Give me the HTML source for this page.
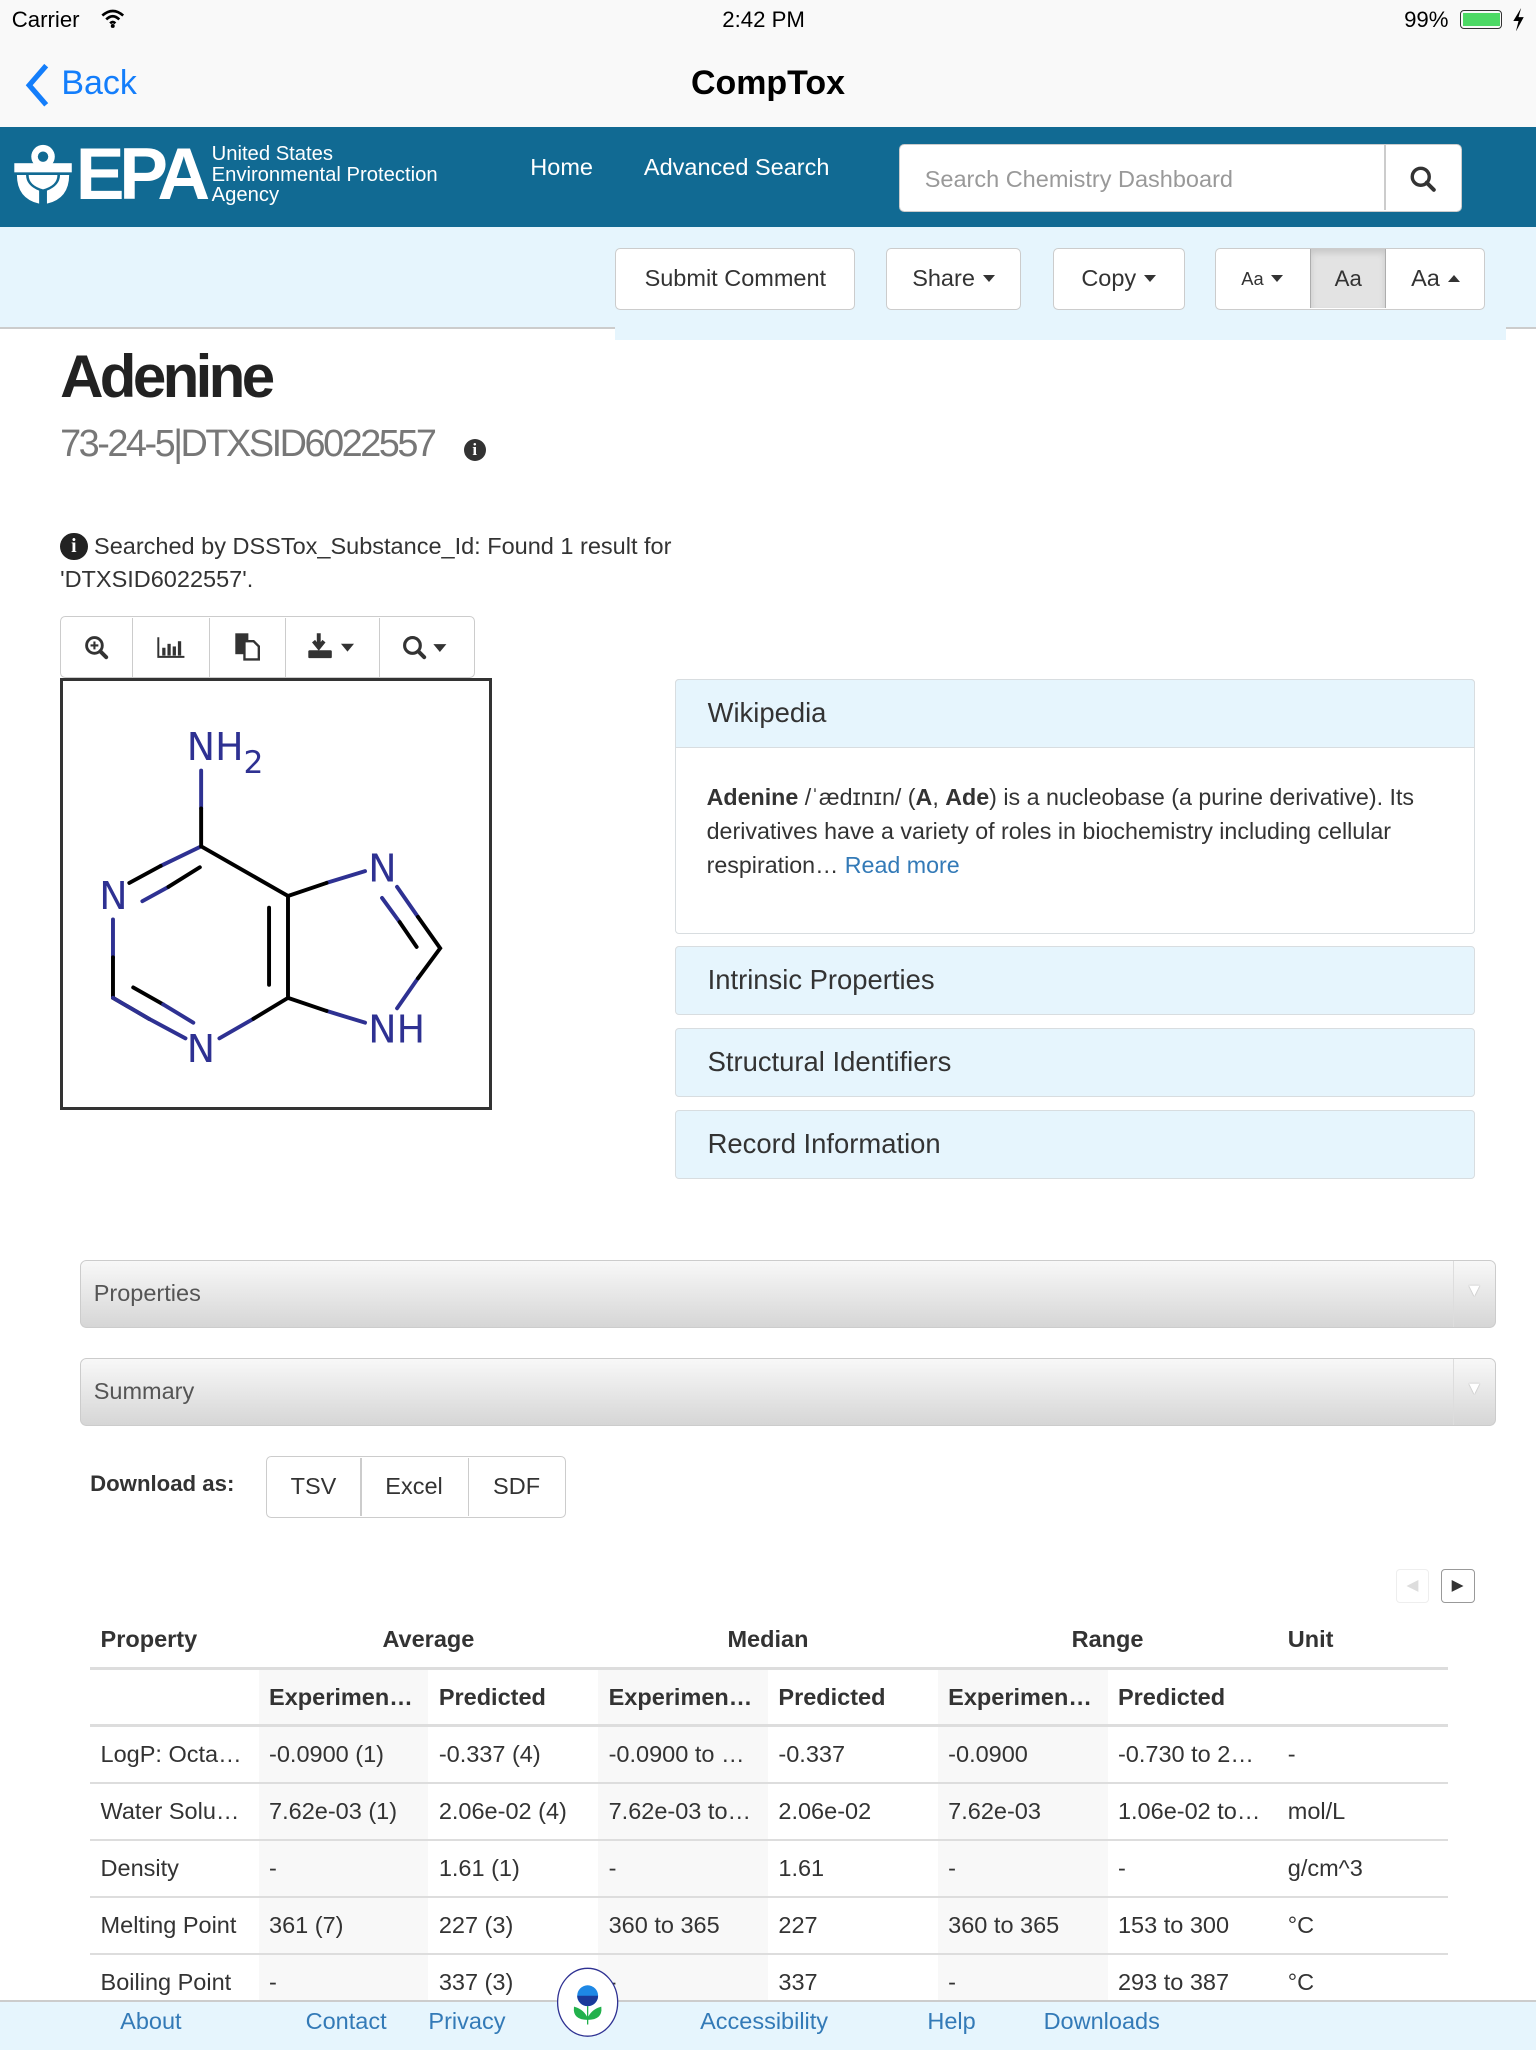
<!DOCTYPE html>
<html><head><meta charset="utf-8">
<style>
html{zoom:1.306122}
body{margin:0;width:1176px;height:1568px;position:relative;overflow:hidden;background:#fff;font-family:"Liberation Sans",Arial,sans-serif;color:#333}
.a{position:absolute}
.btn{position:absolute;background:#fff;border:1px solid #ccc;border-radius:4px;box-sizing:border-box;font-size:18px;color:#333;display:flex;align-items:center;justify-content:center}
.caret{display:inline-block;border-left:5px solid transparent;border-right:5px solid transparent;border-top:6px solid #333;margin-left:6px;vertical-align:middle}
.caretu{display:inline-block;border-left:5px solid transparent;border-right:5px solid transparent;border-bottom:6px solid #333;margin-left:6px;vertical-align:middle}
.ph{position:absolute;left:517px;width:612px;height:53px;background:#e6f5fd;border:1px solid #d8dde0;border-radius:3px;box-sizing:border-box;font-size:21px;color:#333;padding-left:24px;line-height:51px}
.bar{position:absolute;left:61px;width:1084px;height:52px;border:1px solid #ccc;border-radius:5px;box-sizing:border-box;background:linear-gradient(#f8f8f8,#d6d6d6);font-size:18px;color:#555;padding-left:10px;line-height:50px}
.bar:after{content:"▼";position:absolute;right:0;top:0;width:31px;height:50px;border-left:1px solid #ddd;color:#fff;font-size:14px;text-align:center;line-height:44px;text-shadow:0 0 1px #888}
table{position:absolute;left:69px;top:1235px;width:1040px;border-collapse:collapse;font-size:18px;table-layout:fixed}
td,th{height:42px;padding:0 8px;text-align:left;white-space:nowrap;overflow:hidden;text-overflow:ellipsis;border-bottom:2px solid #ddd}
th{font-weight:bold;color:#333}
tr.h1 th{border-bottom:3px solid #ddd;height:41px}
tr.h2 th{border-bottom:3px solid #ddd;height:42px}
.s{background:#f8f8f8}
.foot a{position:absolute;top:0;line-height:30px;font-size:18px;color:#337ab7;text-decoration:none}
</style></head><body>
<div class="a" style="left:0;top:0;width:1176px;height:97px;background:#f9f9f9;border-bottom:1px solid #bbb"></div>
<div class="a" style="left:9px;top:5px;font-size:17px;color:#000">Carrier</div>
<svg class="a" style="left:77px;top:7px" width="18" height="15" viewBox="0 0 18 15"><path d="M1 5Q9 -2 17 5M4 8Q9 3 14 8M7 11Q9 9 11 11" fill="none" stroke="#000" stroke-width="2"/><circle cx="9" cy="13" r="1.5" fill="#000"/></svg>
<div class="a" style="left:553px;top:5px;font-size:17px;color:#000">2:42 PM</div>
<div class="a" style="left:1075px;top:5px;font-size:17px;color:#000">99%</div>
<div class="a" style="left:1118px;top:8px;width:32px;height:14px;border:1px solid #333;border-radius:3px;box-sizing:border-box;padding:1px"><div style="background:#4cd964;width:100%;height:100%"></div></div>
<svg class="a" style="left:1158px;top:6px" width="10" height="18" viewBox="0 0 10 18"><path d="M7 0L1 10H5L3 18L9 7H5Z" fill="#000"/></svg>
<svg class="a" style="left:18px;top:48px" width="22" height="34" viewBox="0 0 22 34"><path d="M17 2 L4 17 L17 32" fill="none" stroke="#147efb" stroke-width="4"/></svg>
<div class="a" style="left:47px;top:49px;font-size:26px;color:#147efb">Back</div>
<div class="a" style="left:0;width:1176px;top:49px;text-align:center;font-size:26px;font-weight:bold;color:#000">CompTox</div>
<div class="a" style="left:0;top:97px;width:1176px;height:77px;background:#116a93"></div>
<svg class="a" style="left:10px;top:108px" width="48" height="50" viewBox="0 0 48 50"><circle cx="23" cy="12" r="9" fill="#fff"/><circle cx="23" cy="12" r="4" fill="#116a93"/><rect x="1" y="17" width="44" height="7" fill="#fff"/><path d="M3 26 Q3 44 20 48 L20 38 Q10 34 10 26Z M43 26 Q43 44 26 48 L26 38 Q36 34 36 26Z M12 26 L34 26 Q34 34 23 37 Q12 34 12 26Z" fill="#fff"/></svg>
<div class="a" style="left:58px;top:100px;font-size:56px;font-weight:bold;color:#fff;letter-spacing:-4px;line-height:68px">EPA</div>
<div class="a" style="left:162px;top:110px;font-size:15.5px;color:#fff;line-height:16px">United States<br>Environmental Protection<br>Agency</div>
<div class="a" style="left:406px;top:118px;font-size:18px;color:#fff">Home</div>
<div class="a" style="left:493px;top:118px;font-size:18px;color:#fff">Advanced Search</div>
<div class="a" style="left:688px;top:110px;width:431px;height:52px;background:#fff;border:1px solid #ccc;border-radius:4px;box-sizing:border-box"></div>
<div class="a" style="left:708px;top:127px;font-size:18px;color:#999">Search Chemistry Dashboard</div>
<div class="a" style="left:1060px;top:111px;width:1px;height:50px;background:#ccc"></div>
<svg class="a" style="left:1079px;top:126px" width="22" height="22" viewBox="0 0 22 22"><circle cx="9" cy="9" r="6.5" fill="none" stroke="#333" stroke-width="2.6"/><path d="M13.5 13.5 L19 19" stroke="#333" stroke-width="3" stroke-linecap="round"/></svg>
<div class="a" style="left:0;top:174px;width:1176px;height:76px;background:#e6f5fd;border-bottom:2px solid #ccc"></div>
<div class="a" style="left:471px;top:240px;width:682px;height:20px;background:#e6f5fd"></div>
<div class="btn" style="left:471px;top:190px;width:184px;height:47px">Submit Comment</div>
<div class="btn" style="left:678px;top:190px;width:104px;height:47px">Share<span class="caret"></span></div>
<div class="btn" style="left:806px;top:190px;width:101px;height:47px">Copy<span class="caret"></span></div>
<div class="btn" style="left:930px;top:190px;width:207px;height:47px"></div>
<div class="a" style="left:930px;top:190px;width:73px;height:47px;display:flex;align-items:center;justify-content:center;font-size:14px">Aa<span class="caret"></span></div>
<div class="a" style="left:1003px;top:191px;width:57px;height:45px;background:#e3e3e3;border-left:1px solid #adadad;border-right:1px solid #adadad;box-shadow:inset 0 3px 5px rgba(0,0,0,.12);display:flex;align-items:center;justify-content:center;font-size:17px">Aa</div>
<div class="a" style="left:1061px;top:190px;width:76px;height:47px;display:flex;align-items:center;justify-content:center;font-size:18px">Aa<span class="caretu"></span></div>
<div class="a" style="left:46px;top:262px;font-size:46px;font-weight:bold;color:#222;letter-spacing:-2.8px">Adenine</div>
<div class="a" style="left:46px;top:324px;font-size:29px;color:#777;letter-spacing:-1.9px">73-24-5|DTXSID6022557</div>
<div class="a" style="left:355px;top:336px;width:17px;height:17px;border-radius:50%;background:#333;color:#fff;font-size:13px;font-weight:bold;text-align:center;line-height:17px;font-family:'Liberation Serif',serif">i</div>
<div class="a" style="left:46px;top:408px;width:21px;height:21px;border-radius:50%;background:#222;color:#fff;font-size:15px;font-weight:bold;text-align:center;line-height:21px;font-family:'Liberation Serif',serif">i</div>
<div class="a" style="left:72px;top:406px;font-size:18px;color:#333;line-height:26px">Searched by DSSTox_Substance_Id: Found 1 result for</div>
<div class="a" style="left:46px;top:431px;font-size:18px;color:#333;line-height:26px">'DTXSID6022557'.</div>
<div class="a" style="left:46px;top:472px;width:318px;height:47px;border:1px solid #ccc;border-radius:4px;box-sizing:border-box"></div>
<div class="a" style="left:101px;top:473px;width:1px;height:45px;background:#ccc"></div>
<div class="a" style="left:160px;top:473px;width:1px;height:45px;background:#ccc"></div>
<div class="a" style="left:218px;top:473px;width:1px;height:45px;background:#ccc"></div>
<div class="a" style="left:290px;top:473px;width:1px;height:45px;background:#ccc"></div>
<svg class="a" style="left:64px;top:486px" width="20" height="20" viewBox="0 0 20 20"><circle cx="8" cy="8" r="6" fill="none" stroke="#333" stroke-width="2.2"/><path d="M12.5 12.5L17 17" stroke="#333" stroke-width="3" stroke-linecap="round"/><path d="M5 8h6M8 5v6" stroke="#333" stroke-width="1.6"/></svg>
<svg class="a" style="left:120px;top:487px" width="22" height="18" viewBox="0 0 22 18"><path d="M1 1V16H21" fill="none" stroke="#333" stroke-width="1.5"/><rect x="4" y="9" width="2.5" height="6" fill="#333"/><rect x="8" y="6" width="2.5" height="9" fill="#333"/><rect x="12" y="8" width="2.5" height="7" fill="#333"/><rect x="16" y="4" width="2.5" height="11" fill="#333"/></svg>
<svg class="a" style="left:179px;top:484px" width="22" height="22" viewBox="0 0 22 22"><rect x="1" y="1" width="10" height="16" fill="#333"/><path d="M8 7H15L19 11V21H8Z" fill="#fff" stroke="#333" stroke-width="1.8"/></svg>
<svg class="a" style="left:235px;top:484px" width="40" height="22" viewBox="0 0 40 22"><path d="M9 1V11M5 7L9 12L13 7" stroke="#333" stroke-width="3" fill="none"/><rect x="1" y="14" width="18" height="6" rx="1" fill="#333"/><path d="M26 9H36L31 15Z" fill="#333"/></svg>
<svg class="a" style="left:308px;top:486px" width="38" height="20" viewBox="0 0 38 20"><circle cx="8" cy="8" r="6" fill="none" stroke="#333" stroke-width="2.4"/><path d="M12.5 12.5L17 17" stroke="#333" stroke-width="3" stroke-linecap="round"/><path d="M24 7H34L29 13Z" fill="#333"/></svg>
<div class="a" style="left:46px;top:519px;width:331px;height:331px;border:3px solid #333;box-sizing:border-box"></div>
<svg class="a" style="left:0;top:0" width="1176" height="1000" viewBox="0 0 1176 1000">
<g stroke-width="3" fill="none" stroke-linecap="round">
<path d="M154 590V619M154 648L123 663M109 690L129 679M86.5 704V733M142 795L114 780M168 795L194 780M279.5 667L250 676M304 679L320 702M292.5 687.5L306 706M304 772L320 749M279.5 783L250 774" stroke="#2e3192"/>
<path d="M154 619V648M123 663L99 676M153 664L129 679M86.5 733V764L114 780M102 756L125 769M194 780L220.5 764M220.5 686V764M206 695V754M154 648L220.5 686L250 676M320 702L337 726L320 749M306 706L319 725M220.5 764L250 774" stroke="#000"/>
<path d="M86.5 764L114 780M125 769L148 783" stroke="#2e3192"/>
</g>
<g fill="#2e3192" font-family="'DejaVu Sans',sans-serif" font-size="29">
<text x="143" y="582">NH<tspan font-size="24" dy="10">2</tspan></text>
<text x="76" y="696">N</text>
<text x="143" y="813">N</text>
<text x="282" y="675">N</text>
<text x="282" y="798">NH</text>
</g>
</svg>
<div class="a" style="left:517px;top:520px;width:612px;height:195px;border:1px solid #d8dde0;border-radius:3px;box-sizing:border-box"></div>
<div class="ph" style="top:520px;border-radius:3px 3px 0 0">Wikipedia</div>
<div class="a" style="left:541px;top:598px;width:575px;font-size:17.8px;line-height:26px;color:#333"><b>Adenine</b> /ˈædɪnɪn/ (<b>A</b>, <b>Ade</b>) is a nucleobase (a purine derivative). Its derivatives have a variety of roles in biochemistry including cellular respiration… <span style="color:#337ab7">Read more</span></div>
<div class="ph" style="top:724px">Intrinsic Properties</div>
<div class="ph" style="top:787px">Structural Identifiers</div>
<div class="ph" style="top:850px">Record Information</div>
<div class="bar" style="top:965px">Properties</div>
<div class="bar" style="top:1040px">Summary</div>
<div class="a" style="left:69px;top:1126px;font-size:17px;font-weight:bold;color:#333">Download as:</div>
<div class="btn" style="left:204px;top:1115px;width:229px;height:47px;border-radius:4px"></div>
<div class="a" style="left:276px;top:1116px;width:1px;height:45px;background:#ccc"></div>
<div class="a" style="left:358px;top:1116px;width:1px;height:45px;background:#ccc"></div>
<div class="a" style="left:204px;top:1128px;width:72px;text-align:center;font-size:18px">TSV</div>
<div class="a" style="left:276px;top:1128px;width:82px;text-align:center;font-size:18px">Excel</div>
<div class="a" style="left:358px;top:1128px;width:75px;text-align:center;font-size:18px">SDF</div>
<div class="a" style="left:1069px;top:1201px;width:25px;height:26px;border:1px solid #eee;border-radius:3px;box-sizing:border-box;color:#ddd;font-size:12px;text-align:center;line-height:24px">◀</div>
<div class="a" style="left:1103px;top:1201px;width:26px;height:26px;border:1px solid #999;border-radius:3px;box-sizing:border-box;color:#333;font-size:12px;text-align:center;line-height:24px">▶</div>
<table>
<colgroup><col style="width:129px"><col style="width:130px"><col style="width:130px"><col style="width:130px"><col style="width:130px"><col style="width:130px"><col style="width:130px"><col style="width:131px"></colgroup>
<tr class="h1"><th>Property</th><th colspan="2" style="text-align:center">Average</th><th colspan="2" style="text-align:center">Median</th><th colspan="2" style="text-align:center">Range</th><th>Unit</th></tr>
<tr class="h2"><th></th><th class="s">Experimen…</th><th>Predicted</th><th class="s">Experimen…</th><th>Predicted</th><th class="s">Experimen…</th><th>Predicted</th><th></th></tr>
<tr><td>LogP: Octa…</td><td class="s">-0.0900 (1)</td><td>-0.337 (4)</td><td class="s">-0.0900 to …</td><td>-0.337</td><td class="s">-0.0900</td><td>-0.730 to 2…</td><td>-</td></tr>
<tr><td>Water Solu…</td><td class="s">7.62e-03 (1)</td><td>2.06e-02 (4)</td><td class="s">7.62e-03 to…</td><td>2.06e-02</td><td class="s">7.62e-03</td><td>1.06e-02 to…</td><td>mol/L</td></tr>
<tr><td>Density</td><td class="s">-</td><td>1.61 (1)</td><td class="s">-</td><td>1.61</td><td class="s">-</td><td>-</td><td>g/cm^3</td></tr>
<tr><td>Melting Point</td><td class="s">361 (7)</td><td>227 (3)</td><td class="s">360 to 365</td><td>227</td><td class="s">360 to 365</td><td>153 to 300</td><td>°C</td></tr>
<tr><td>Boiling Point</td><td class="s">-</td><td>337 (3)</td><td class="s">-</td><td>337</td><td class="s">-</td><td>293 to 387</td><td>°C</td></tr>
</table>
<div class="a foot" style="left:0;top:1531px;width:1176px;height:37px;background:#e6f5fd;border-top:2px solid #ccc">
<a style="left:92px">About</a><a style="left:234px">Contact</a><a style="left:328px">Privacy</a><a style="left:536px">Accessibility</a><a style="left:710px">Help</a><a style="left:799px">Downloads</a>
</div>
<svg class="a" style="left:425px;top:1506px" width="50" height="54" viewBox="0 0 50 54"><ellipse cx="25" cy="27" rx="23" ry="26" fill="#fff" stroke="#2e3192" stroke-width="1"/><circle cx="25" cy="22" r="8" fill="#1e88e5"/><path d="M17 22H33A8 8 0 0 1 17 22Z" fill="#1a3a9a"/><path d="M25 30V44M25 40Q14 40 15 31Q22 33 25 40M25 40Q36 40 35 31Q28 33 25 40" fill="#22b14c" stroke="#22b14c"/></svg>
</body></html>
